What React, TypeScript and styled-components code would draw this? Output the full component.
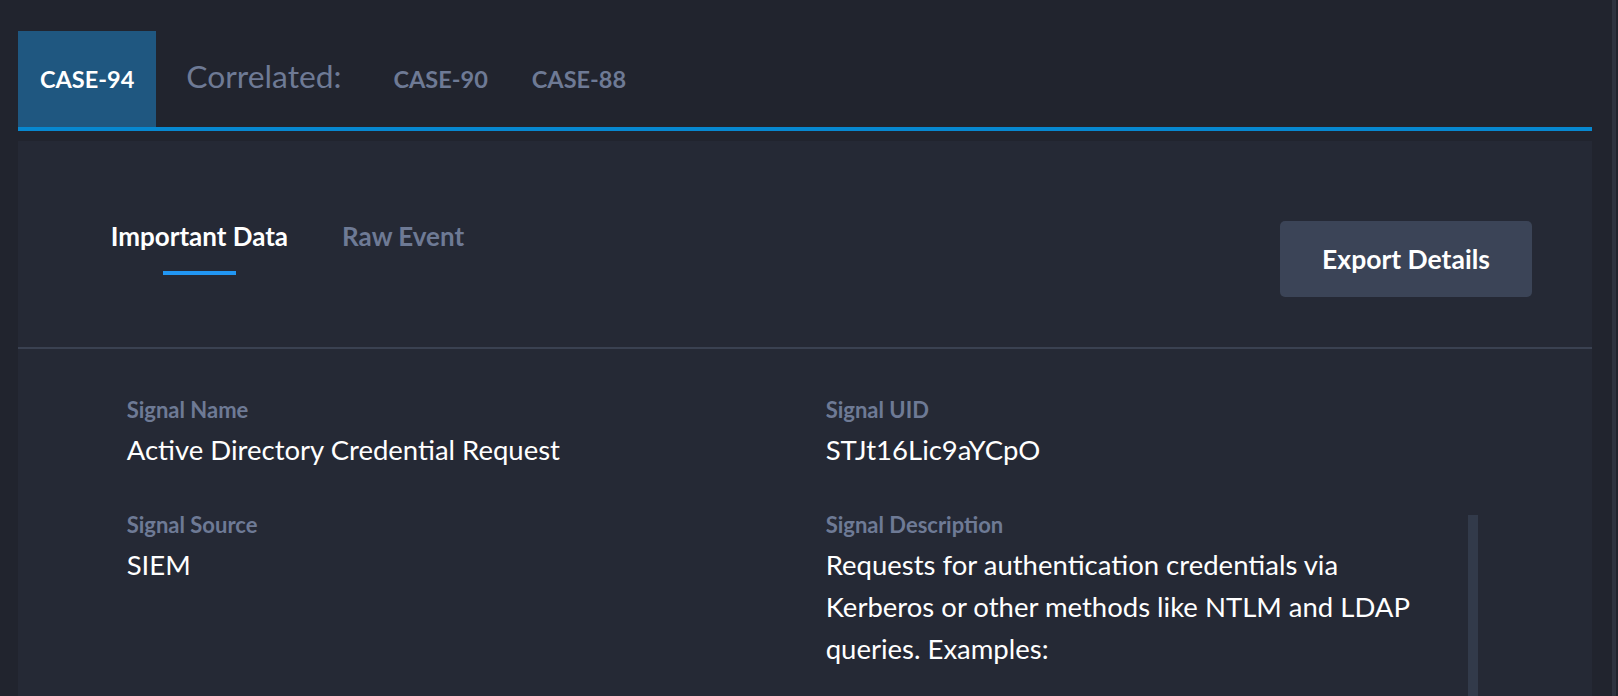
import React, { useState } from 'react';
import styled, { createGlobalStyle } from 'styled-components';

const GlobalStyle = createGlobalStyle`
  html, body {
    margin: 0;
    padding: 0;
    background: #21242e;
    overflow: hidden;
  }
  body {
    font-family: Lato, "Noto Sans", sans-serif;
    color: #ffffff;
  }
  * {
    box-sizing: border-box;
  }
`;

const Page = styled.div`
  display: flex;
  height: 696px;
  padding-left: 18px;
  overflow: hidden;
`;

const Main = styled.main`
  flex: 1;
  min-width: 0;
  display: flex;
  flex-direction: column;
  padding-top: 31px;
`;

const EdgeTrack = styled.div`
  width: 4px;
  margin: 0 2px 0 20px;
  background: #2e333f;
`;

const CaseBar = styled.nav`
  flex-shrink: 0;
  display: flex;
  align-items: stretch;
  height: 100px;
  border-bottom: 4px solid #0788d0;
`;

const CaseTab = styled.div<{ $active?: boolean }>`
  display: flex;
  align-items: center;
  padding: 0 22px;
  font-size: 23.5px;
  font-weight: 700;
  color: ${p => (p.$active ? '#ffffff' : '#6e7a95')};
  background: ${p => (p.$active ? '#1f5780' : 'transparent')};
`;

const CorrelatedLabel = styled.span`
  display: flex;
  align-items: center;
  margin: 0 30px;
  padding-bottom: 6px;
  font-size: 31.8px;
  color: #6e7a95;
`;

const Panel = styled.section`
  flex: 1;
  min-height: 0;
  margin-top: 10px;
  background: #252935;
  overflow: hidden;
`;

const PanelHeader = styled.header`
  display: flex;
  justify-content: space-between;
  align-items: flex-start;
  padding: 80px 60px 50px 92.7px;
  border-bottom: 2px solid #3a4151;
`;

const SubTabs = styled.div`
  display: flex;
  gap: 54px;
`;

const SubTab = styled.button<{ $active?: boolean }>`
  display: flex;
  flex-direction: column;
  align-items: center;
  padding: 0;
  border: none;
  background: none;
  font-family: inherit;
  font-size: 26px;
  line-height: 30px;
  font-weight: 700;
  color: ${p => (p.$active ? '#ffffff' : '#6e7a95')};
  cursor: pointer;

  &::after {
    content: '';
    display: block;
    width: 73px;
    height: 4px;
    margin-top: 20px;
    background: ${p => (p.$active ? '#2196f3' : 'transparent')};
  }
`;

const ExportButton = styled.button`
  width: 252px;
  height: 76px;
  border: none;
  border-radius: 5px;
  background: #3b4457;
  color: #ffffff;
  font-family: inherit;
  font-size: 26.5px;
  font-weight: 700;
  cursor: pointer;
`;

const Details = styled.div`
  display: grid;
  grid-template-columns: 699px 652px;
  row-gap: 41px;
  padding: 47.8px 0 0 108.7px;
`;

const Field = styled.div`
  display: flex;
  flex-direction: column;
`;

const ScrollBox = styled.div`
  display: flex;
  align-items: flex-start;
  justify-content: space-between;
  min-height: 300px;
  overflow: hidden;
`;

const ScrollContent = styled(Field)`
  width: 605px;
`;

const ScrollThumb = styled.div`
  flex-shrink: 0;
  width: 10px;
  height: 240px;
  margin-top: 3px;
  background: #323a4a;
`;

const Label = styled.span`
  font-size: 22px;
  line-height: 26px;
  font-weight: 700;
  color: #6e7a95;
  margin-bottom: 6px;
`;

const Value = styled.span`
  font-size: 27.5px;
  line-height: 42px;
  color: #ffffff;
`;

const App: React.FC = () => {
  const [tab, setTab] = useState('important');

  return (
    <>
      <GlobalStyle />
      <Page>
        <Main>
          <CaseBar>
            <CaseTab $active>CASE-94</CaseTab>
            <CorrelatedLabel>Correlated:</CorrelatedLabel>
            <CaseTab>CASE-90</CaseTab>
            <CaseTab>CASE-88</CaseTab>
          </CaseBar>
          <Panel>
            <PanelHeader>
              <SubTabs>
                <SubTab $active={tab === 'important'} onClick={() => setTab('important')}>
                  Important Data
                </SubTab>
                <SubTab $active={tab === 'raw'} onClick={() => setTab('raw')}>
                  Raw Event
                </SubTab>
              </SubTabs>
              <ExportButton>Export Details</ExportButton>
            </PanelHeader>
            <Details>
              <Field>
                <Label>Signal Name</Label>
                <Value>Active Directory Credential Request</Value>
              </Field>
              <Field>
                <Label>Signal UID</Label>
                <Value>STJt16Lic9aYCpO</Value>
              </Field>
              <Field>
                <Label>Signal Source</Label>
                <Value>SIEM</Value>
              </Field>
              <ScrollBox>
                <ScrollContent>
                  <Label>Signal Description</Label>
                  <Value>
                    Requests for authentication credentials via Kerberos or other methods like NTLM and LDAP
                    queries. Examples:
                  </Value>
                </ScrollContent>
                <ScrollThumb />
              </ScrollBox>
            </Details>
          </Panel>
        </Main>
        <EdgeTrack />
      </Page>
    </>
  );
};

export default App;
